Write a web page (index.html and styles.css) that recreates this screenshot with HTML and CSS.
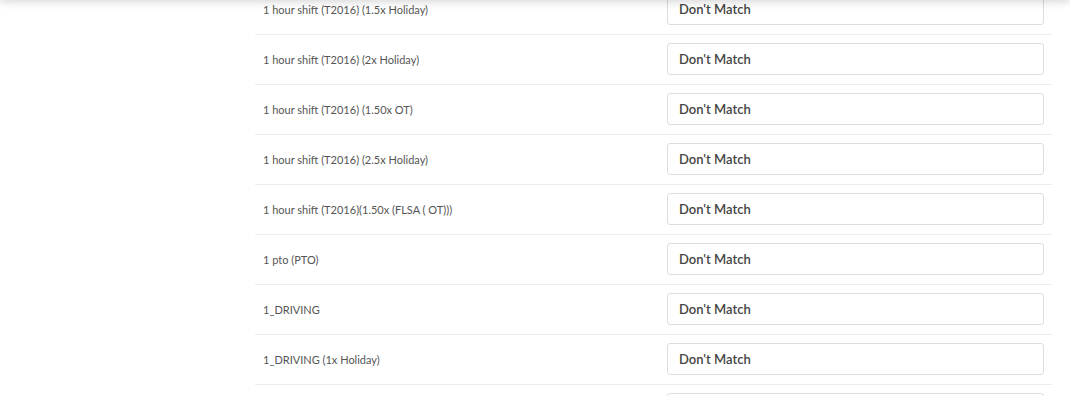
FILE: index.html
```html
<!DOCTYPE html>
<html lang="en">
<head>
    <meta charset="UTF-8">
    <title>Pay Code Mapping</title>
    <link rel="stylesheet" href="styles.css">
</head>
<body>
    <div class="topbar"></div>
    <div class="mapping">
        <table class="mapping-table">
            <tbody>
                <tr>
                    <td class="code-name">1 hour shift (T2016) (1.5x Holiday)</td>
                    <td class="code-match"><input type="text" class="match-input" value="Don't Match"></td>
                </tr>
                <tr>
                    <td class="code-name">1 hour shift (T2016) (2x Holiday)</td>
                    <td class="code-match"><input type="text" class="match-input" value="Don't Match"></td>
                </tr>
                <tr>
                    <td class="code-name">1 hour shift (T2016) (1.50x OT)</td>
                    <td class="code-match"><input type="text" class="match-input" value="Don't Match"></td>
                </tr>
                <tr>
                    <td class="code-name">1 hour shift (T2016) (2.5x Holiday)</td>
                    <td class="code-match"><input type="text" class="match-input" value="Don't Match"></td>
                </tr>
                <tr>
                    <td class="code-name">1 hour shift (T2016)(1.50x (FLSA ( OT)))</td>
                    <td class="code-match"><input type="text" class="match-input" value="Don't Match"></td>
                </tr>
                <tr>
                    <td class="code-name">1 pto (PTO)</td>
                    <td class="code-match"><input type="text" class="match-input" value="Don't Match"></td>
                </tr>
                <tr>
                    <td class="code-name">1_DRIVING</td>
                    <td class="code-match"><input type="text" class="match-input" value="Don't Match"></td>
                </tr>
                <tr>
                    <td class="code-name">1_DRIVING (1x Holiday)</td>
                    <td class="code-match"><input type="text" class="match-input" value="Don't Match"></td>
                </tr>
                <tr>
                    <td class="code-name"></td>
                    <td class="code-match"><input type="text" class="match-input" value=""></td>
                </tr>
            </tbody>
        </table>
    </div>
</body>
</html>
```

FILE: styles.css
```css
* {
    box-sizing: border-box;
    margin: 0;
    padding: 0;
}

html, body {
    height: 100%;
    overflow: hidden;
}

body {
    font-family: Lato, 'Open Sans', sans-serif;
    background: #ffffff;
    color: #555555;
}

.topbar {
    position: fixed;
    top: -20px;
    left: 0;
    right: 0;
    height: 20px;
    background: #ffffff;
    box-shadow: 0 2px 9px rgba(0, 0, 0, 0.16);
    z-index: 2;
}

.mapping {
    margin: -15px 0 0 255px;
    width: 797px;
}

.mapping-table {
    width: 100%;
    border-collapse: collapse;
}

.mapping-table tr {
    border-bottom: 1px solid #ececec;
}

.mapping-table td {
    padding: 8px 8px 9px;
    vertical-align: middle;
}

.code-name {
    width: 404px;
    font-size: 11px;
    color: #555555;
}

.match-input {
    display: block;
    width: 377px;
    height: 32px;
    padding: 0 11px;
    border: 1px solid #dddddd;
    border-radius: 3px;
    background: #ffffff;
    font-family: Lato, 'Open Sans', sans-serif;
    font-size: 13px;
    font-weight: 600;
    color: #444444;
}
```
